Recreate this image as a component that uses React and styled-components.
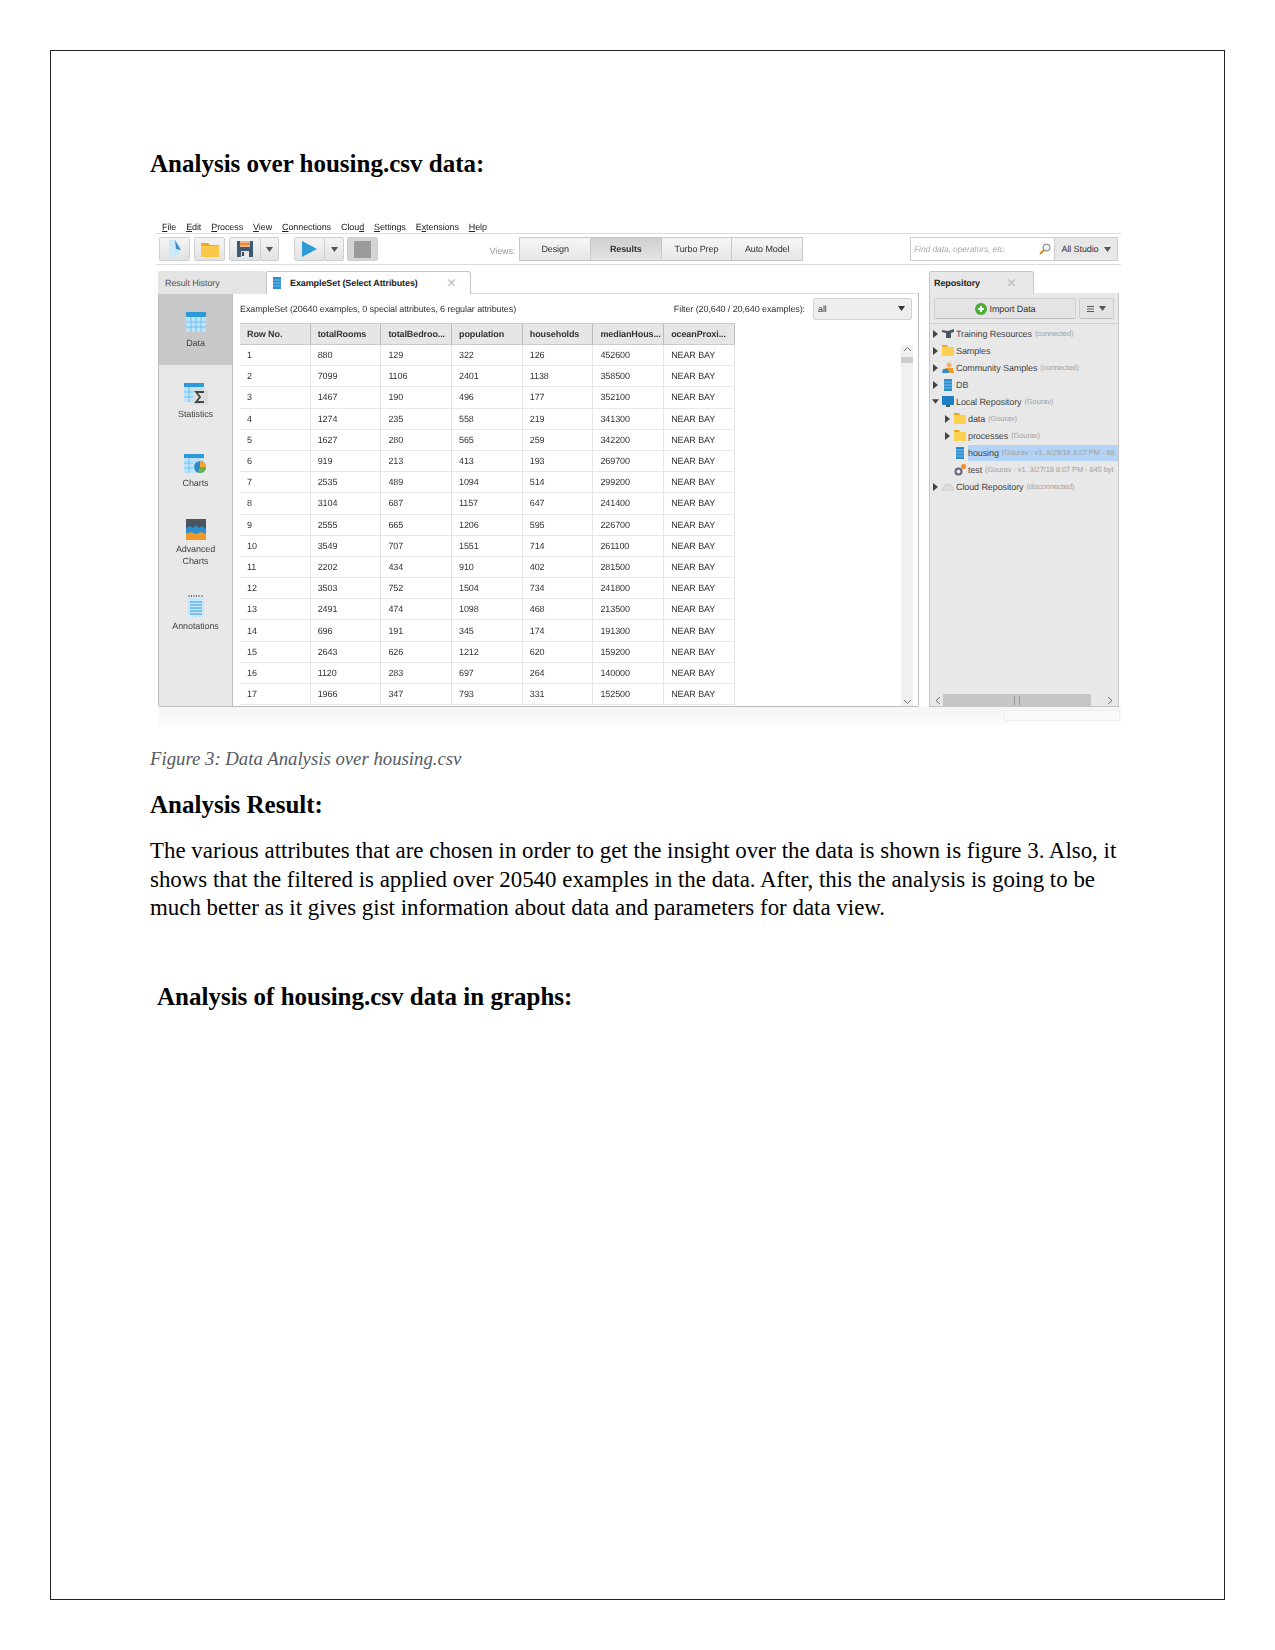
import React from "react";
import styled, { createGlobalStyle } from "styled-components";

const Global = createGlobalStyle`
  html, body { margin: 0; padding: 0; background: #fff; }
`;

const Page = styled.div`
  box-sizing: border-box;
  width: 1175px;
  height: 1550px;
  margin: 50px 0 50px 50px;
  border: 1px solid #222;
  padding: 99px 0 0 99px;
  font-family: "Liberation Serif", "Times New Roman", serif;
  color: #000;
`;

const Heading = styled.h2`
  margin: ${p => p.$top || 0}px 0 0 ${p => p.$indent || 0}px;
  font-size: 25px;
  line-height: 28px;
  font-weight: 700;
`;

const Caption = styled.div`
  margin-top: 22px;
  font-size: 18.75px;
  line-height: 24px;
  font-style: italic;
  color: #555b63;
`;

const Body = styled.p`
  margin: 18px 0 0;
  font-size: 22.92px;
  line-height: 28.5px;
`;

/* the embedded application screenshot */
const Shot = styled.div`
  width: 965px;
  margin: 42px 0 0 6px;
  font-family: "Liberation Sans", Arial, sans-serif;
  font-size: 9px;
  letter-spacing: -0.1px;
  text-rendering: geometricPrecision;
  color: #333;
  filter: blur(0.35px);
`;

const MenuBar = styled.div`
  box-sizing: border-box;
  height: 14px;
  display: flex;
  align-items: center;
  gap: 10px;
  padding: 1px 0 0 6px;
  border-bottom: 1px solid #ddd;
  color: #222;
`;

const Toolbar = styled.div`
  box-sizing: border-box;
  height: 31px;
  display: flex;
  padding: 3px 3px 0 3px;
  border-bottom: 1px solid #ddd;
`;

const ToolBtn = styled.div`
  box-sizing: border-box;
  width: ${p => p.$w}px;
  height: 24px;
  margin-left: ${p => p.$gap || 0}px;
  display: flex;
  align-items: center;
  justify-content: center;
  background: ${p => (p.$off ? "#d4d4d4" : "linear-gradient(#f4f4f4, #e2e2e2)")};
  border: 1px solid #cfcfcf;
  border-radius: 2px;
`;

const ViewsLabel = styled.div`
  margin-left: auto;
  padding-right: 5px;
  align-self: center;
  color: #999;
`;

const ViewTab = styled.div`
  box-sizing: border-box;
  width: 71.7px;
  height: 24px;
  display: flex;
  align-items: center;
  justify-content: center;
  border: 1px solid #c8c8c8;
  margin-left: -1px;
  font-weight: ${p => (p.$active ? 700 : 400)};
  background: ${p => (p.$active ? "linear-gradient(#cfcfcf, #e4e4e4)" : "linear-gradient(#f6f6f6, #e6e6e6)")};
`;

const SearchBox = styled.div`
  box-sizing: border-box;
  width: 145px;
  height: 24px;
  margin-left: 107px;
  display: flex;
  align-items: center;
  justify-content: space-between;
  padding: 0 3px;
  background: #fff;
  border: 1px solid #ccc;
  font-style: italic;
  font-size: 8.5px;
  color: #aaa;
`;

const StudioBtn = styled.div`
  box-sizing: border-box;
  width: 63px;
  height: 24px;
  display: flex;
  align-items: center;
  justify-content: center;
  gap: 5px;
  background: #e8e8e8;
  border: 1px solid #ccc;
  border-left: 0;
`;

const Workspace = styled.div`
  display: flex;
  gap: 10px;
  margin: 6px 0 0 2px;
`;

const Column = styled.div`
  width: ${p => p.$w}px;
  flex: none;
`;

const TabRow = styled.div`
  height: 22px;
  display: flex;
`;

const Tab = styled.div`
  box-sizing: border-box;
  width: ${p => p.$w}px;
  height: 23px;
  display: flex;
  align-items: center;
  padding-left: ${p => p.$pad || 6}px;
  position: relative;
  border-radius: 2px 3px 0 0;
  background: ${p => p.$bg};
  border: ${p => (p.$line ? "1px solid #c6c6c6" : "0")};
  border-bottom: 0;
  font-weight: ${p => (p.$bold ? 700 : 400)};
  color: ${p => (p.$bold ? "#222" : "#555")};
`;

const TabTitle = styled.span`
  margin-left: ${p => p.$left || 0}px;
  flex: 1;
  white-space: nowrap;
`;

const Close = styled.span`
  margin-right: ${p => p.$right}px;
  color: #bbb;
  font-size: 16px;
  line-height: 13px;
  font-weight: 400;
`;

const Panel = styled.div`
  box-sizing: border-box;
  height: 414px;
  display: flex;
  background: #fff;
  border: 1px solid #bdbdbd;
  border-top-color: #ddd;
  border-radius: 0 0 2px 2px;
`;

const Sidebar = styled.div`
  width: 73px;
  flex: none;
  background: #e8e8e8;
  border-right: 1px solid #bdbdbd;
`;

const SideItem = styled.div`
  box-sizing: border-box;
  height: ${p => p.$h}px;
  padding-top: 18px;
  display: flex;
  flex-direction: column;
  align-items: center;
  text-align: center;
  line-height: 12px;
  background: ${p => (p.$active ? "#c8c8c8" : "transparent")};
  color: #444;
`;

const SideLabel = styled.div`
  margin-top: ${p => p.$top || 3}px;
`;

const Content = styled.div`
  flex: 1;
  min-width: 0;
  padding-left: 7px;
`;

const FilterBar = styled.div`
  height: 29px;
  display: flex;
  align-items: center;
  justify-content: space-between;
  padding-right: 6px;
`;

const FilterRight = styled.div`
  display: flex;
  align-items: center;
  gap: 8px;
`;

const Select = styled.div`
  box-sizing: border-box;
  width: 99px;
  height: 22px;
  display: flex;
  align-items: center;
  justify-content: space-between;
  padding: 0 6px 0 4px;
  background: #eee;
  border: 1px solid #d4d4d4;
  border-radius: 2px;
`;

const TableArea = styled.div`
  display: flex;
  justify-content: space-between;
  height: 383px;
  overflow: hidden;
`;

const Table = styled.div`
  width: 495px;
  flex: none;
`;

const Row = styled.div`
  box-sizing: border-box;
  display: grid;
  grid-template-columns: repeat(7, 70.7px);
  height: ${p => (p.$head ? 22 : 21.2)}px;
  align-items: center;
  background: ${p => (p.$head ? "#e6e6e6" : "#fff")};
  border-bottom: 1px solid ${p => (p.$head ? "#ccc" : "#e8e8e8")};
  font-weight: ${p => (p.$head ? 700 : 400)};
  border-top: ${p => (p.$head ? "1px solid #ccc" : "0")};
`;

const Cell = styled.div`
  box-sizing: border-box;
  height: 100%;
  display: flex;
  align-items: center;
  padding-left: 7px;
  border-right: 1px solid ${p => (p.$head ? "#bbb" : "#e6e6e6")};
  white-space: nowrap;
  overflow: hidden;
`;

const VScroll = styled.div`
  box-sizing: border-box;
  width: 12px;
  height: 361px;
  margin: 22px 5px 0 0;
  background: #f0f0f0;
  display: flex;
  flex-direction: column;
  justify-content: space-between;
  align-items: center;
  position: relative;
`;

const VThumb = styled.div`
  position: absolute;
  top: 12px;
  left: 0;
  width: 12px;
  height: 6px;
  background: #ccc;
`;

const RepoPanel = styled.div`
  box-sizing: border-box;
  height: 414px;
  display: flex;
  flex-direction: column;
  background: #e8e8e8;
  border: 1px solid #c6c6c6;
  border-top: 0;
`;

const RepoActions = styled.div`
  box-sizing: border-box;
  height: 31px;
  display: flex;
  gap: 3px;
  padding: 5px 0 0 4px;
  border-bottom: 1px solid #d0d0d0;
`;

const RepoBtn = styled.div`
  box-sizing: border-box;
  width: ${p => p.$w}px;
  height: 21px;
  display: flex;
  align-items: center;
  justify-content: center;
  gap: ${p => p.$gap || 3}px;
  background: #e4e4e4;
  border: 1px solid #cfcfcf;
  border-bottom-color: #bbb;
  border-radius: 2px;
`;

const Tree = styled.div`
  flex: 1;
  padding-top: 1px;
  overflow: hidden;
`;

const TreeRow = styled.div`
  height: 17px;
  display: flex;
  align-items: center;
  padding-left: ${p => (p.$level ? 14 : 2)}px;
  white-space: nowrap;
  overflow: hidden;
`;

const Toggle = styled.span`
  width: 7px;
  height: 10px;
  flex: none;
  display: flex;
  align-items: center;
  justify-content: center;
  margin-right: 3px;
`;

const TreeIcon = styled.span`
  width: 12px;
  height: 13px;
  flex: none;
  display: flex;
  align-items: center;
  justify-content: center;
  margin-right: 2px;
`;

const TreeText = styled.span`
  display: flex;
  align-items: center;
  flex: 1;
  height: 16px;
  min-width: 0;
  background: ${p => (p.$selected ? "#b3d3f7" : "transparent")};
  color: #444;
`;

const Meta = styled.span`
  margin-left: 3px;
  font-size: 7.5px;
  color: #a2a2a2;
`;

const HScroll = styled.div`
  height: 12px;
  display: flex;
  align-items: center;
  justify-content: space-between;
  padding: 0 4px;
  position: relative;
`;

const HThumb = styled.div`
  position: absolute;
  left: 13px;
  top: 0;
  width: 148px;
  height: 12px;
  background: #c6c6c6;
  display: flex;
  justify-content: center;
  align-items: center;
`;

const Grip = styled.div`
  width: 4px;
  height: 9px;
  border-left: 1px solid #999;
  border-right: 1px solid #999;
`;

const StatusStrip = styled.div`
  height: 18px;
  margin-left: 2px;
  display: flex;
  justify-content: flex-end;
  padding-top: 3px;
  box-sizing: border-box;
  background: linear-gradient(#f5f5f5, #fbfbfb);
`;

const StatusBox = styled.div`
  width: 116px;
  height: 11px;
  margin-right: 1px;
  background: #fafafa;
  border: 1px solid #eee;
  box-sizing: border-box;
`;

const Caret = ({ color = "#555" }) => (
  <svg width="7" height="5" viewBox="0 0 7 5"><path d="M0 0h7L3.5 5z" fill={color} /></svg>
);

const Right = () => (
  <svg width="5" height="8" viewBox="0 0 5 8"><path d="M0 0l5 4-5 4z" fill="#444" /></svg>
);

const Down = () => (
  <svg width="8" height="5" viewBox="0 0 8 5"><path d="M0 0h8L4 5z" fill="#444" /></svg>
);

const Chevron = ({ d }) => (
  <svg width="9" height="9" viewBox="0 0 9 9">
    <path d={d} fill="none" stroke="#777" strokeWidth="1" />
  </svg>
);

const DocIcon = () => (
  <svg width="17" height="20" viewBox="0 0 17 20">
    <path d="M3 1h6l6 10-4 8H3z" fill="#cde8f6" />
    <path d="M9 1l6 10-5-1z" fill="#3d8fd0" />
  </svg>
);

const FolderBig = () => (
  <svg width="18" height="15" viewBox="0 0 18 15">
    <path d="M0 1h7l2 2h9v12H0z" fill="#f2a91f" />
    <rect y="4" width="18" height="11" fill="#fbc94a" />
  </svg>
);

const SaveIcon = () => (
  <svg width="16" height="16" viewBox="0 0 16 16">
    <rect width="16" height="16" fill="#3d5a73" />
    <rect x="3" y="0" width="10" height="6" fill="#f4b183" />
    <rect x="3" y="2" width="10" height="2" fill="#e8893b" />
    <rect x="4" y="10" width="8" height="6" fill="#e8e8e8" />
    <rect x="5" y="11" width="2" height="4" fill="#444" />
  </svg>
);

const PlayIcon = () => (
  <svg width="15" height="16" viewBox="0 0 15 16"><path d="M0 0l15 8-15 8z" fill="#2e9ad8" /></svg>
);

const SearchIcon = () => (
  <svg width="12" height="12" viewBox="0 0 12 12">
    <circle cx="7.5" cy="4.5" r="3.5" fill="#eef6fb" stroke="#777" />
    <path d="M5 7L1 11" stroke="#d98a2b" strokeWidth="2" />
  </svg>
);

const TableIcon = () => (
  <svg width="20" height="20" viewBox="0 0 20 20">
    <rect width="20" height="20" fill="#bfe4fa" />
    <rect width="20" height="5" fill="#2c9ad8" />
    <path d="M0 10h20M0 15h20M5 5v15M10 5v15M15 5v15" stroke="#6fc0ec" strokeWidth="1" />
  </svg>
);

const StatsIcon = () => (
  <svg width="24" height="22" viewBox="0 0 24 22">
    <rect width="20" height="19" fill="#bfe4fa" />
    <rect width="20" height="4" fill="#2c9ad8" />
    <path d="M0 9h9M0 14h9M5 4v15" stroke="#6fc0ec" />
    <rect x="9" y="7" width="15" height="15" fill="#dcdcdc" />
    <path d="M20 9h-8l4 5-4 5h8" fill="none" stroke="#444" strokeWidth="1.8" />
  </svg>
);

const ChartsIcon = () => (
  <svg width="24" height="20" viewBox="0 0 24 20">
    <rect width="20" height="19" fill="#bfe4fa" />
    <rect width="20" height="4" fill="#2c9ad8" />
    <path d="M0 9h9M0 14h9M5 4v15" stroke="#6fc0ec" />
    <circle cx="16" cy="13" r="6" fill="#2e8bc9" />
    <path d="M16 13V7a6 6 0 0 1 6 6z" fill="#f0a830" />
    <path d="M16 13h6a6 6 0 0 1-8 5.6z" fill="#6db33f" />
  </svg>
);

const AdvIcon = () => (
  <svg width="20" height="21" viewBox="0 0 20 21">
    <rect width="20" height="21" fill="#4a5560" />
    <path d="M0 9l4-2 3 2 3-3 3 3 3-2 4 3v5H0z" fill="#2c8fd0" />
    <path d="M0 15l5-2 5 2 5-2 5 2v6H0z" fill="#ef9a26" />
  </svg>
);

const NotesIcon = () => (
  <svg width="18" height="23" viewBox="0 0 18 23">
    <path d="M2 1v2M4.500 1v2M7 1v2M9.500 1v2M12 1v2M15 1v2" stroke="#666" />
    <rect x="1" y="4" width="16" height="19" fill="#c9e8fb" />
    <path d="M3 8h12M3 11h12M3 14h12M3 17h12M3 20h12" stroke="#2c9ad8" />
  </svg>
);

const PlusIcon = () => (
  <svg width="12" height="12" viewBox="0 0 12 12">
    <circle cx="6" cy="6" r="6" fill="#4cae32" />
    <path d="M6 3v6M3 6h6" stroke="#fff" strokeWidth="2" />
  </svg>
);

const BarsIcon = () => (
  <svg width="7" height="6" viewBox="0 0 7 6"><path d="M0 .5h7M0 3h7M0 5.500h7" stroke="#555" /></svg>
);

const FolderIcon = () => (
  <svg width="12" height="11" viewBox="0 0 12 11">
    <path d="M0 0h5l1 2h6v9H0z" fill="#e9a91e" />
    <rect y="2" width="12" height="9" fill="#fbd04e" />
  </svg>
);

const StripIcon = () => (
  <svg width="8" height="12" viewBox="0 0 8 12">
    <rect width="8" height="12" fill="#2c8fd0" />
    <path d="M0 3h8M0 6h8M0 9h8" stroke="#9ad0f0" strokeWidth=".7" />
  </svg>
);

const CapIcon = () => (
  <svg width="12" height="9" viewBox="0 0 12 9">
    <path d="M0 1l6 1 6-2v3l-3 1v5H4V4L0 3z" fill="#4a5560" />
  </svg>
);

const PeopleIcon = () => (
  <svg width="12" height="11" viewBox="0 0 12 11">
    <circle cx="7" cy="3" r="2.500" fill="#f0b070" />
    <path d="M3 6h8l1 5H2z" fill="#ef9a26" />
    <path d="M0 11l1-4h5l1 4z" fill="#2c8fd0" />
  </svg>
);

const MonitorIcon = () => (
  <svg width="12" height="11" viewBox="0 0 12 11">
    <rect width="12" height="9" fill="#1f7fc4" />
    <rect x="4" y="9" width="4" height="2" fill="#555" />
  </svg>
);

const GearIcon = () => (
  <svg width="12" height="12" viewBox="0 0 12 12">
    <circle cx="4.500" cy="7.500" r="3" fill="none" stroke="#667" strokeWidth="2" />
    <circle cx="9.500" cy="2.500" r="2.500" fill="#ef8a26" />
  </svg>
);

const CloudIcon = () => (
  <svg width="12" height="9" viewBox="0 0 12 9">
    <path d="M2 9a2 2 0 0 1 0-4 3 3 0 0 1 5-2 2.500 2.500 0 0 1 3 2 2 2 0 0 1 0 4z" fill="#ddd" stroke="#ccc" />
  </svg>
);

const menu = [
  ["", "F", "ile"],
  ["", "E", "dit"],
  ["", "P", "rocess"],
  ["", "V", "iew"],
  ["", "C", "onnections"],
  ["Clou", "d", ""],
  ["", "S", "ettings"],
  ["E", "x", "tensions"],
  ["", "H", "elp"],
];

const headers = ["Row No.", "totalRooms", "totalBedroo...", "population", "households", "medianHous...", "oceanProxi..."];

const rows = [
  [880, 129, 322, 126, 452600],
  [7099, 1106, 2401, 1138, 358500],
  [1467, 190, 496, 177, 352100],
  [1274, 235, 558, 219, 341300],
  [1627, 280, 565, 259, 342200],
  [919, 213, 413, 193, 269700],
  [2535, 489, 1094, 514, 299200],
  [3104, 687, 1157, 647, 241400],
  [2555, 665, 1206, 595, 226700],
  [3549, 707, 1551, 714, 261100],
  [2202, 434, 910, 402, 281500],
  [3503, 752, 1504, 734, 241800],
  [2491, 474, 1098, 468, 213500],
  [696, 191, 345, 174, 191300],
  [2643, 626, 1212, 620, 159200],
  [1120, 283, 697, 264, 140000],
  [1966, 347, 793, 331, 152500],
];

const tree = [
  { arrow: "right", icon: <CapIcon />, name: "Training Resources", meta: "(connected)" },
  { arrow: "right", icon: <FolderIcon />, name: "Samples" },
  { arrow: "right", icon: <PeopleIcon />, name: "Community Samples", meta: "(connected)" },
  { arrow: "right", icon: <StripIcon />, name: "DB" },
  { arrow: "down", icon: <MonitorIcon />, name: "Local Repository", meta: "(Gourav)" },
  { level: 1, arrow: "right", icon: <FolderIcon />, name: "data", meta: "(Gourav)" },
  { level: 1, arrow: "right", icon: <FolderIcon />, name: "processes", meta: "(Gourav)" },
  { level: 1, icon: <StripIcon />, name: "housing", meta: "(Gourav - v1, 8/29/18 3:27 PM - 88", selected: true },
  { level: 1, icon: <GearIcon />, name: "test", meta: "(Gourav - v1, 3/27/18 8:07 PM - 845 byt" },
  { arrow: "right", icon: <CloudIcon />, name: "Cloud Repository", meta: "(disconnected)" },
];

export default function App() {
  return (
    <>
      <Global />
      <Page>
        <Heading>Analysis over housing.csv data:</Heading>
        <Shot>
          <MenuBar>
            {menu.map(([a, u, b]) => (
              <span key={a + u + b}>{a}<u>{u}</u>{b}</span>
            ))}
          </MenuBar>
          <Toolbar>
            <ToolBtn $w={31}><DocIcon /></ToolBtn>
            <ToolBtn $w={31} $gap={4}><FolderBig /></ToolBtn>
            <ToolBtn $w={32} $gap={4}><SaveIcon /></ToolBtn>
            <ToolBtn $w={19} $gap={-1}><Caret /></ToolBtn>
            <ToolBtn $w={31} $gap={15}><PlayIcon /></ToolBtn>
            <ToolBtn $w={20} $gap={-1}><Caret /></ToolBtn>
            <ToolBtn $w={31} $gap={3} $off><svg width="17" height="17"><rect width="17" height="17" fill="#9a9a9a" /></svg></ToolBtn>
            <ViewsLabel>Views:</ViewsLabel>
            <ViewTab>Design</ViewTab>
            <ViewTab $active>Results</ViewTab>
            <ViewTab>Turbo Prep</ViewTab>
            <ViewTab>Auto Model</ViewTab>
            <SearchBox>Find data, operators, etc.<SearchIcon /></SearchBox>
            <StudioBtn>All Studio <Caret /></StudioBtn>
          </Toolbar>
          <Workspace>
            <Column $w={761}>
              <TabRow>
                <Tab $w={108} $bg="#e4e4e4" $pad={7}>Result History</Tab>
                <Tab $w={205} $bg="#fff" $line $bold>
                  <StripIcon />
                  <TabTitle $left={9}>ExampleSet (Select Attributes)</TabTitle>
                  <Close $right={14}>×</Close>
                </Tab>
              </TabRow>
              <Panel>
                <Sidebar>
                  <SideItem $h={71} $active><TableIcon /><SideLabel $top={5}>Data</SideLabel></SideItem>
                  <SideItem $h={71}><StatsIcon /><SideLabel>Statistics</SideLabel></SideItem>
                  <SideItem $h={65}><ChartsIcon /><SideLabel>Charts</SideLabel></SideItem>
                  <SideItem $h={75}><AdvIcon /><SideLabel>Advanced<br />Charts</SideLabel></SideItem>
                  <SideItem $h={70}><NotesIcon /><SideLabel>Annotations</SideLabel></SideItem>
                </Sidebar>
                <Content>
                  <FilterBar>
                    <span>ExampleSet (20640 examples, 0 special attributes, 6 regular attributes)</span>
                    <FilterRight>
                      <span>Filter (20,640 / 20,640 examples):</span>
                      <Select>all <Caret color="#333" /></Select>
                    </FilterRight>
                  </FilterBar>
                  <TableArea>
                    <Table>
                      <Row $head>
                        {headers.map(h => <Cell $head key={h}>{h}</Cell>)}
                      </Row>
                      {rows.map((r, i) => (
                        <Row key={i}>
                          <Cell>{i + 1}</Cell>
                          {r.map((v, j) => <Cell key={j}>{v}</Cell>)}
                          <Cell>NEAR BAY</Cell>
                        </Row>
                      ))}
                    </Table>
                    <VScroll>
                      <Chevron d="M1 6l3.500-3.500L8 6" />
                      <VThumb />
                      <Chevron d="M1 3l3.500 3.500L8 3" />
                    </VScroll>
                  </TableArea>
                </Content>
              </Panel>
            </Column>
            <Column $w={190}>
              <TabRow>
                <Tab $w={105} $bg="#e8e8e8" $line $bold $pad={4}>
                  <TabTitle>Repository</TabTitle>
                  <Close $right={17}>×</Close>
                </Tab>
              </TabRow>
              <RepoPanel>
                <RepoActions>
                  <RepoBtn $w={142}><PlusIcon />Import Data</RepoBtn>
                  <RepoBtn $w={35} $gap={5}><BarsIcon /><Caret /></RepoBtn>
                </RepoActions>
                <Tree>
                  {tree.map(t => (
                    <TreeRow key={t.name} $level={t.level}>
                      <Toggle>
                        {t.arrow === "right" && <Right />}
                        {t.arrow === "down" && <Down />}
                      </Toggle>
                      <TreeIcon>{t.icon}</TreeIcon>
                      <TreeText $selected={t.selected}>
                        {t.name}
                        {t.meta && <Meta>{t.meta}</Meta>}
                      </TreeText>
                    </TreeRow>
                  ))}
                </Tree>
                <HScroll>
                  <Chevron d="M6 1L2 4.500 6 8" />
                  <HThumb><Grip /></HThumb>
                  <Chevron d="M3 1l4 3.500L3 8" />
                </HScroll>
              </RepoPanel>
            </Column>
          </Workspace>
          <StatusStrip><StatusBox /></StatusStrip>
        </Shot>
        <Caption>Figure 3: Data Analysis over housing.csv</Caption>
        <Heading $top={20}>Analysis Result:</Heading>
        <Body>
          The various attributes that are chosen in order to get the insight over the data is shown is figure 3. Also, it
          <br />
          shows that the filtered is applied over 20540 examples in the data. After, this the analysis is going to be
          <br />
          much better as it gives gist information about data and parameters for data view.
        </Body>
        <Heading $top={60} $indent={7}>Analysis of housing.csv data in graphs:</Heading>
      </Page>
    </>
  );
}
